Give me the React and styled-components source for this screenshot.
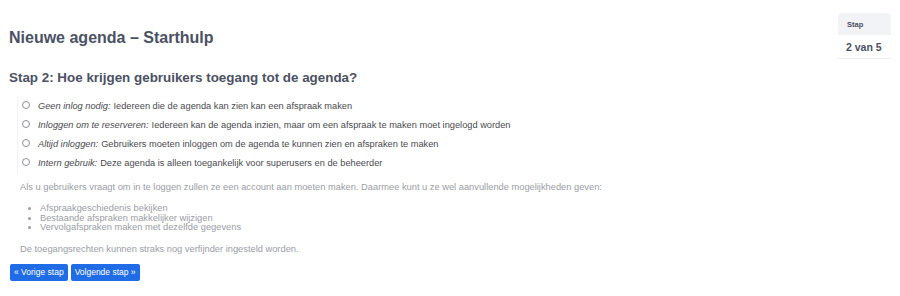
import React from "react";
import styled, { createGlobalStyle } from "styled-components";

const GlobalStyle = createGlobalStyle`
  html, body {
    margin: 0;
    padding: 0;
    background: #fff;
    font-family: "Liberation Sans", Arial, sans-serif;
  }
`;

const Page = styled.div`
  display: flex;
  align-items: flex-start;
  padding: 13px 9px 0 9px;
  gap: 20px;
`;

const Main = styled.div`
  flex: 1;
`;

const Title = styled.h1`
  margin: 15px 0 0 0;
  font-size: 16px;
  line-height: 20px;
  font-weight: bold;
  color: #4b5163;
`;

const StepTitle = styled.h2`
  margin: 21px 0 0 0;
  font-size: 13.4px;
  line-height: 18px;
  font-weight: bold;
  color: #4b5163;
`;

const Options = styled.div`
  margin: 9px 0 0 8px;
  border-left: 1px solid #f2f2f4;
  padding: 0 0 2px 0;
  display: flex;
  flex-direction: column;
`;

const Option = styled.label`
  display: flex;
  align-items: center;
  height: 19px;
  font-size: 9.25px;
  color: #4a4a4f;
`;

const Radio = styled.span`
  width: 6px;
  height: 6px;
  border: 1px solid #8d8f96;
  border-radius: 50%;
  margin: 0 8px 2px 4px;
  flex-shrink: 0;
`;

const Em = styled.em`
  font-style: italic;
  margin-right: 3px;
`;

const Note = styled.p`
  margin: ${(p) => p.$top || 7}px 0 0 11px;
  font-size: 9.3px;
  line-height: 12px;
  color: #9a9da5;
`;

const List = styled.ul`
  margin: 11px 0 0 11px;
  padding: 0 0 0 20px;
  font-size: 9.3px;
  line-height: 9.6px;
  color: #9a9da5;
  list-style: disc;
`;

const Buttons = styled.div`
  display: flex;
  gap: 3px;
  margin-top: 9px;
  margin-left: 1px;
`;

const Button = styled.button`
  font-family: "Liberation Sans", Arial, sans-serif;
  font-size: 8.5px;
  height: 17px;
  padding: 0 4px;
  border: none;
  border-radius: 2px;
  background: #1f6ce6;
  color: #fff;
  cursor: pointer;
`;

const Side = styled.div`
  width: 53px;
`;

const SideHead = styled.div`
  background: #f1f3f6;
  border-radius: 4px 4px 0 0;
  padding: 0 9px;
  height: 22px;
  display: flex;
  align-items: center;
  font-size: 7.5px;
  font-weight: bold;
  color: #4b5163;
`;

const SideValue = styled.div`
  padding: 0 8px;
  height: 23px;
  display: flex;
  align-items: center;
  white-space: nowrap;
  font-size: 10.5px;
  font-weight: bold;
  color: #4b5163;
  border-bottom: 1px solid #eceef1;
`;

const options = [
  ["Geen inlog nodig:", "Iedereen die de agenda kan zien kan een afspraak maken"],
  ["Inloggen om te reserveren:", "Iedereen kan de agenda inzien, maar om een afspraak te maken moet ingelogd worden"],
  ["Altijd inloggen:", "Gebruikers moeten inloggen om de agenda te kunnen zien en afspraken te maken"],
  ["Intern gebruik:", "Deze agenda is alleen toegankelijk voor superusers en de beheerder"],
];

export default function App() {
  return (
    <>
      <GlobalStyle />
      <Page>
        <Main>
          <Title>Nieuwe agenda – Starthulp</Title>
          <StepTitle>Stap 2: Hoe krijgen gebruikers toegang tot de agenda?</StepTitle>
          <Options>
            {options.map(([label, text]) => (
              <Option key={label}>
                <Radio />
                <Em>{label}</Em>
                {text}
              </Option>
            ))}
          </Options>
          <Note>
            Als u gebruikers vraagt om in te loggen zullen ze een account aan moeten maken. Daarmee kunt u ze wel aanvullende mogelijkheden geven:
          </Note>
          <List>
            <li>Afspraakgeschiedenis bekijken</li>
            <li>Bestaande afspraken makkelijker wijzigen</li>
            <li>Vervolgafspraken maken met dezelfde gegevens</li>
          </List>
          <Note $top={10}>De toegangsrechten kunnen straks nog verfijnder ingesteld worden.</Note>
          <Buttons>
            <Button>« Vorige stap</Button>
            <Button>Volgende stap »</Button>
          </Buttons>
        </Main>
        <Side>
          <SideHead>Stap</SideHead>
          <SideValue>2 van 5</SideValue>
        </Side>
      </Page>
    </>
  );
}
